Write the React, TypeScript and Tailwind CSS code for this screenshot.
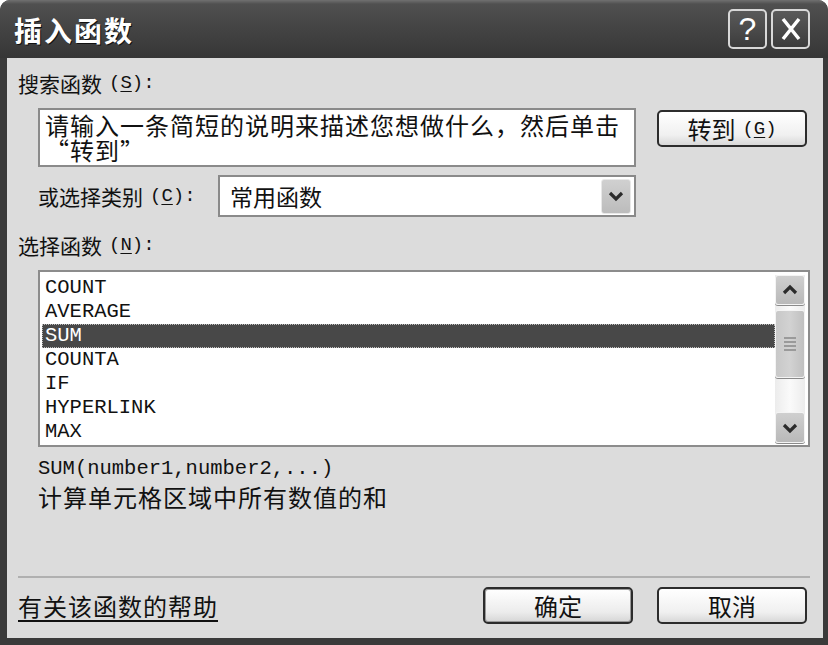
const CJK = "font-['Noto_Sans_CJK_SC',sans-serif]";

// Access-key suffix like "(S):", SimSun-style half-width chars
function Key({ k, colon = true }: { k: string; colon?: boolean }) {
  return (
    <span className="ml-[7px] font-['Liberation_Mono',monospace] text-[19px] leading-[20px]">
      {"("}
      <span className="underline underline-offset-[3px]">{k}</span>
      {colon ? "):" : ")"}
    </span>
  );
}

function Chevron({ up = false }: { up?: boolean }) {
  return (
    <svg width="18" height="14" viewBox="0 0 18 14">
      <path
        d={up ? "M3 10 L9 4 L15 10" : "M3 4 L9 10 L15 4"}
        fill="none"
        stroke="#2b2b2b"
        strokeWidth="3.2"
      />
    </svg>
  );
}

function Button({ children, main = false }: { children: React.ReactNode; main?: boolean }) {
  return (
    <button
      className={
        main
          ? "flex h-[37px] w-[150px] items-center justify-center rounded-[5px] border-2 border-[#2c2c2c] bg-[linear-gradient(to_bottom,#ffffff,#ececec_70%,#d6d6d6)] text-[24px] leading-none text-[#111] shadow-[inset_0_0_0_1px_#9a9a9a]"
          : "flex h-[37px] w-[150px] items-center justify-center rounded-[5px] border-2 border-[#2c2c2c] bg-[linear-gradient(to_bottom,#ffffff,#f0f0f0_70%,#d8d8d8)] text-[24px] leading-none text-[#111]"
      }
    >
      {children}
    </button>
  );
}

const FUNCS = ["COUNT", "AVERAGE", "SUM", "COUNTA", "IF", "HYPERLINK", "MAX"];

export default function App() {
  return (
    <div className={`flex h-[645px] w-[828px] flex-col overflow-hidden rounded-t-[10px] bg-[#3a3a3a] ${CJK}`}>
      {/* Title bar */}
      <div className="flex h-[58px] shrink-0 items-center bg-[linear-gradient(to_bottom,#707070_0px,#505050_4px,#444444_28px,#363636_100%)] pl-[14px] pr-[18px]">
        <span className="mt-[2px] text-[28px] font-bold tracking-[2px] text-white [text-shadow:1px_1px_0_#111]">
          插入函数
        </span>
        <div className="ml-auto flex gap-[4px]">
          <div className="flex h-[40px] w-[39px] items-center justify-center rounded-[5px] border-2 border-[#d8d8d8] bg-[linear-gradient(to_bottom,#5a5a5a,#3c3c3c)] font-['Liberation_Sans',sans-serif] text-[32px] leading-none text-white">
            ?
          </div>
          <div className="flex h-[40px] w-[39px] items-center justify-center rounded-[5px] border-2 border-[#d8d8d8] bg-[linear-gradient(to_bottom,#5a5a5a,#3c3c3c)]">
            <svg width="24" height="26" viewBox="0 0 24 26">
              <path d="M4 3 L20 23 M20 3 L4 23" stroke="#ffffff" strokeWidth="3.5" />
            </svg>
          </div>
        </div>
      </div>

      {/* Body */}
      <div className="mb-[7px] ml-[7px] mr-[5px] flex flex-1 flex-col bg-[#dcdcdc] pl-[11px] text-[#111]">
        <div className="mt-[13px] flex h-[24px] items-center text-[21px] leading-[24px]">
          搜索函数<Key k="S" />
        </div>

        <div className="ml-[20px] mt-[13px] flex items-start gap-[21px]">
          <div className="h-[59px] w-[598px] border-2 border-[#8a8a8a] bg-white pl-[5px] pt-[2px] text-[24px] leading-[25px] tracking-[1px]">
            请输入一条简短的说明来描述您想做什么，然后单击
            <br />
            “转到”
          </div>
          <div className="mt-[2px]">
            <Button>
              <span className="text-[24px]">转到</span>
              <Key k="G" colon={false} />
            </Button>
          </div>
        </div>

        <div className="ml-[20px] mt-[8px] flex h-[42px] items-center">
          <div className="flex h-[24px] w-[180px] items-center text-[21px] leading-[24px]">
            或选择类别<Key k="C" />
          </div>
          <div className="flex h-[42px] w-[418px] items-center border-2 border-[#8a8a8a] bg-white pl-[10px] pr-[3px]">
            <span className="text-[23px] leading-[28px]">常用函数</span>
            <div className="ml-auto flex h-[35px] w-[30px] items-center justify-center rounded-[3px] border border-[#e8e8e8] bg-[linear-gradient(to_bottom,#d0d0d0,#bcbcbc)]">
              <Chevron />
            </div>
          </div>
        </div>

        <div className="mt-[16px] flex h-[24px] items-center text-[21px] leading-[24px]">
          选择函数<Key k="N" />
        </div>

        {/* Function list */}
        <div className="ml-[20px] mt-[13px] flex h-[177px] w-[772px] shrink-0 border-2 border-[#8c8c8c] bg-white">
          <div className="flex flex-1 flex-col pl-[2px] pt-[4px] font-['Liberation_Mono',monospace] text-[20.5px] leading-[24px]">
            {FUNCS.map((f) =>
              f === "SUM" ? (
                <div
                  key={f}
                  className="h-[24px] border border-dotted border-[#bdbdbd] bg-[#484848] pl-[2px] leading-[22px] text-white"
                >
                  {f}
                </div>
              ) : (
                <div key={f} className="h-[24px] pl-[3px]">
                  {f}
                </div>
              )
            )}
          </div>
          <div className="mr-[3px] mt-[3px] flex h-[168px] w-[30px] flex-col bg-[linear-gradient(to_right,#ececec,#fafafa,#ececec)]">
            <div className="flex h-[30px] items-center justify-center rounded-[3px] border border-[#f4f4f4] bg-[linear-gradient(to_bottom,#cfcfcf,#b9b9b9)] shadow-[0_1px_0_#8a8a8a]">
              <Chevron up />
            </div>
            <div className="mt-[5px] flex h-[68px] flex-col items-center justify-center gap-[2px] rounded-[3px] border border-[#f4f4f4] bg-[linear-gradient(to_right,#c8c8c8,#d2d2d2,#c0c0c0)] shadow-[0_1px_0_#8a8a8a]">
              <div className="h-[2px] w-[12px] bg-[#9a9a9a]" />
              <div className="h-[2px] w-[12px] bg-[#9a9a9a]" />
              <div className="h-[2px] w-[12px] bg-[#9a9a9a]" />
              <div className="h-[2px] w-[12px] bg-[#9a9a9a]" />
            </div>
            <div className="mt-auto flex h-[31px] items-center justify-center rounded-[3px] border border-[#f4f4f4] bg-[linear-gradient(to_bottom,#cfcfcf,#b9b9b9)] shadow-[0_1px_0_#8a8a8a]">
              <Chevron />
            </div>
          </div>
        </div>

        <div className="ml-[20px] mt-[10px] h-[24px] font-['Liberation_Mono',monospace] text-[20.5px] leading-[24px]">
          SUM(number1,number2,...)
        </div>
        <div className="ml-[20px] mt-[2px] h-[28px] text-[24px] leading-[28px] tracking-[1px]">计算单元格区域中所有数值的和</div>

        <div className="mt-[65px] h-[2px] w-[792px] shrink-0 bg-[#b0b0b0]" />

        <div className="mt-[9px] flex w-[789px] items-center">
          <span className="mr-auto text-[24px] leading-[28px] tracking-[1px] underline underline-offset-[4px]">有关该函数的帮助</span>
          <div className="flex gap-[24px]">
            <Button main>确定</Button>
            <Button>取消</Button>
          </div>
        </div>
      </div>
    </div>
  );
}
